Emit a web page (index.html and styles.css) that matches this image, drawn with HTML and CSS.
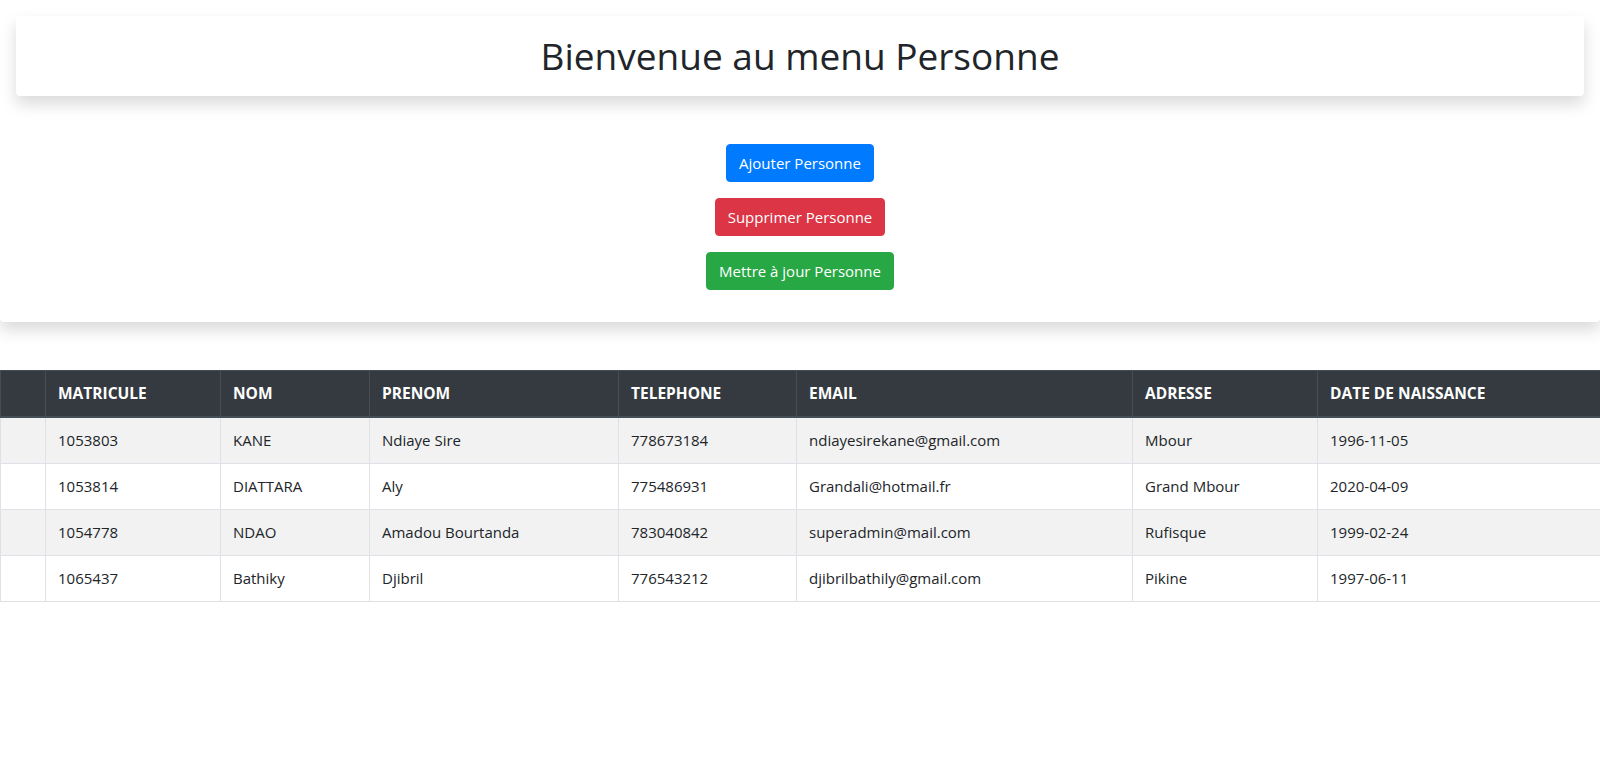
FILE: index.html
```html
<!DOCTYPE html>
<html lang="fr">
<head>
<meta charset="utf-8">
<title>Menu Personne</title>
<link rel="stylesheet" href="styles.css">
</head>
<body>
<div class="top-panel">
  <div class="title-card">
    <h1 class="title">Bienvenue au menu Personne</h1>
  </div>
  <div class="actions">
    <button class="btn btn-primary">Ajouter Personne</button>
    <button class="btn btn-danger">Supprimer Personne</button>
    <button class="btn btn-success">Mettre à jour Personne</button>
  </div>
</div>

<table class="data-table">
  <colgroup>
    <col class="c0"><col class="c1"><col class="c2"><col class="c3"><col class="c4"><col class="c5"><col class="c6"><col class="c7">
  </colgroup>
  <thead>
    <tr>
      <th></th>
      <th>MATRICULE</th>
      <th>NOM</th>
      <th>PRENOM</th>
      <th>TELEPHONE</th>
      <th>EMAIL</th>
      <th>ADRESSE</th>
      <th>DATE DE NAISSANCE</th>
    </tr>
  </thead>
  <tbody>
    <tr>
      <td></td><td>1053803</td><td>KANE</td><td>Ndiaye Sire</td><td>778673184</td><td>ndiayesirekane@gmail.com</td><td>Mbour</td><td>1996-11-05</td>
    </tr>
    <tr>
      <td></td><td>1053814</td><td>DIATTARA</td><td>Aly</td><td>775486931</td><td>Grandali@hotmail.fr</td><td>Grand Mbour</td><td>2020-04-09</td>
    </tr>
    <tr>
      <td></td><td>1054778</td><td>NDAO</td><td>Amadou Bourtanda</td><td>783040842</td><td>superadmin@mail.com</td><td>Rufisque</td><td>1999-02-24</td>
    </tr>
    <tr>
      <td></td><td>1065437</td><td>Bathiky</td><td>Djibril</td><td>776543212</td><td>djibrilbathily@gmail.com</td><td>Pikine</td><td>1997-06-11</td>
    </tr>
  </tbody>
</table>
</body>
</html>
```

FILE: styles.css
```css
html, body {
  margin: 0;
  padding: 0;
  background: #fff;
}

body {
  font-family: "Open Sans", "Noto Sans", "Liberation Sans", sans-serif;
  color: #212529;
  font-size: 15px;
  line-height: 1.5;
}

.top-panel {
  background: #fff;
  border-radius: 4px;
  box-shadow: 0 8px 16px rgba(0, 0, 0, 0.15);
  padding: 16px 16px 32px;
}

.title-card {
  background: #fff;
  border-radius: 4px;
  box-shadow: 0 8px 16px rgba(0, 0, 0, 0.15);
  padding: 16px;
}

.title {
  margin: 0;
  font-size: 37px;
  font-weight: 400;
  line-height: 48px;
  text-align: center;
  color: #212529;
}

.actions {
  margin-top: 48px;
  display: flex;
  flex-direction: column;
  align-items: center;
  gap: 16px;
}

.btn {
  font-family: inherit;
  font-size: 15px;
  line-height: 24px;
  padding: 6px 12px;
  border: 1px solid transparent;
  border-radius: 4px;
  color: #fff;
  cursor: pointer;
}

.btn-primary { background: #007bff; border-color: #007bff; }
.btn-danger { background: #dc3545; border-color: #dc3545; }
.btn-success { background: #28a745; border-color: #28a745; }

.data-table {
  margin-top: 48px;
  width: 100%;
  table-layout: fixed;
  border-collapse: collapse;
  font-size: 15px;
  line-height: 21px;
  color: #212529;
}

.c0 { width: 45px; }
.c1 { width: 175px; }
.c2 { width: 149px; }
.c3 { width: 249px; }
.c4 { width: 178px; }
.c5 { width: 336px; }
.c6 { width: 185px; }
.c7 { width: 283px; }

.data-table th,
.data-table td {
  padding: 12px;
  text-align: left;
  vertical-align: top;
  white-space: nowrap;
}

.data-table th {
  background: #343a40;
  color: #fff;
  font-size: 15.5px;
  font-weight: 700;
  border: 1px solid #454d55;
  border-bottom-width: 2px;
}

.data-table td {
  border: 1px solid #dee2e6;
}

.data-table tbody tr:nth-child(odd) td {
  background: #f2f2f2;
}
```
